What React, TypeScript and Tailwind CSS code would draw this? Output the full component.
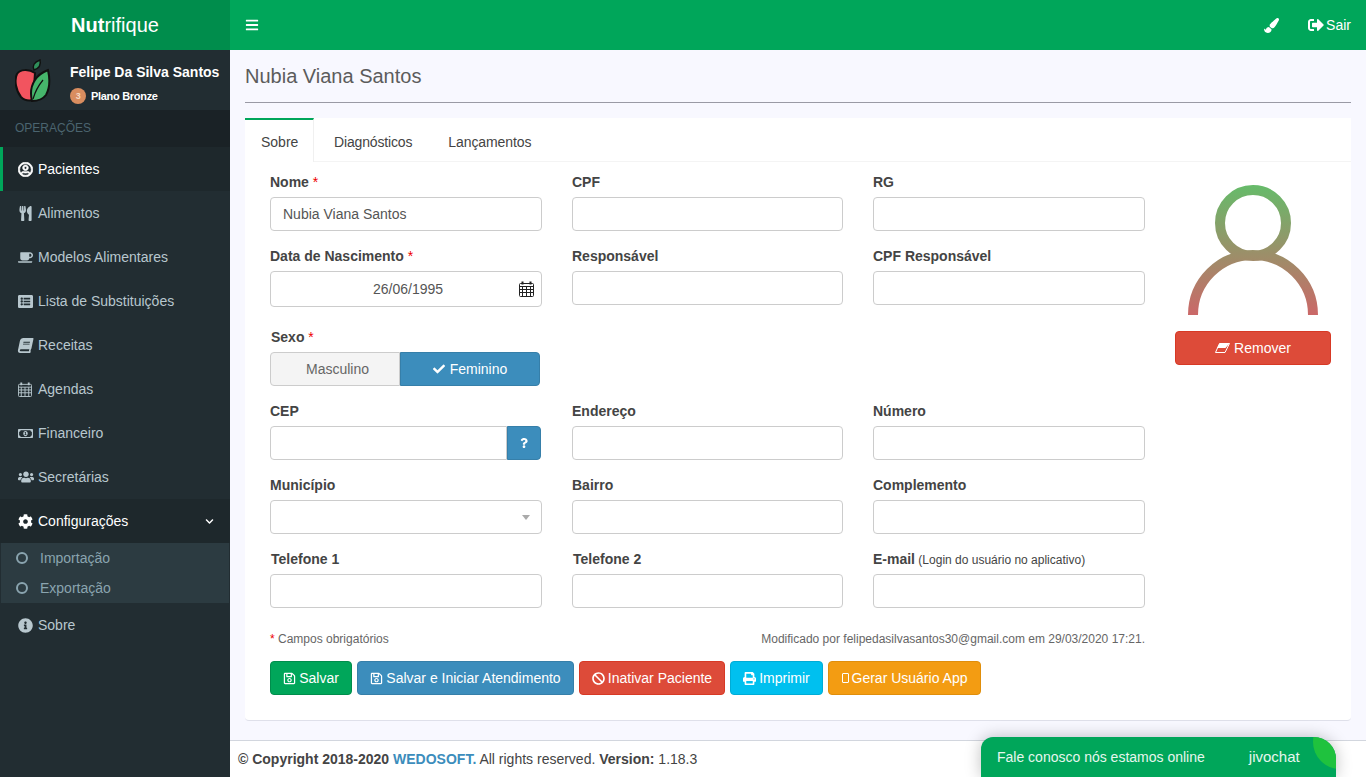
import type { ReactNode } from 'react';
import {
  FaBan,
  FaBars,
  FaBook,
  FaCheck,
  FaChevronDown,
  FaCoffee,
  FaCog,
  FaInfoCircle,
  FaListAlt,
  FaPaintBrush,
  FaPrint,
  FaQuestion,
  FaRegMoneyBillAlt,
  FaRegSave,
  FaRegUserCircle,
  FaSignOutAlt,
  FaUsers,
  FaUtensils,
} from 'react-icons/fa';

function CalendarIcon({ className }: { className?: string }) {
  return (
    <svg viewBox="0 0 15 16" className={className} fill="none" stroke="currentColor" strokeWidth="1">
      <rect x="0.5" y="2.5" width="14" height="13" rx="1" />
      <path d="M0.5 5.5h14M0.5 8.5h14M0.5 11.5h14M3.5 5.5v10M7.5 5.5v10M11.5 5.5v10" />
      <path d="M3.5 0.5v3M11.5 0.5v3" strokeWidth="2" />
    </svg>
  );
}

function EraserIcon() {
  return (
    <svg viewBox="0 0 15 10" className="h-[10px] w-[15px]">
      <path d="M4.5 0.5H14.5L10 9.5H0.5z" fill="none" stroke="#fff" />
      <path d="M4.5 0.5H14.5L10.5 5H2.2z" fill="#fff" />
    </svg>
  );
}

function AppleLogo() {
  return (
    <svg viewBox="0 0 36 44" className="h-[44px] w-[36px] shrink-0">
      <path d="M19 12c-2-4 0-8 6-10 1 4 0 8-6 10z" fill="#2f8f5b" stroke="#111" strokeWidth="1.5" />
      <path d="M20 15C14 11 5 11 2 16-1 22 1 33 6 39c3 3 8 4 12 3z" fill="#f2545f" stroke="#111" strokeWidth="2" />
      <path d="M33 12c2 9 2 18-2 25-3 4-8 6-14 6-2-8-1-15 3-21 3-5 8-8 13-10z" fill="#46b56b" stroke="#111" strokeWidth="2" />
      <path d="M18 41c2-7 5-13 10-19" fill="none" stroke="#111" strokeWidth="1.2" />
    </svg>
  );
}

function AvatarPlaceholder() {
  return (
    <svg viewBox="0 0 130 130" className="h-[130px] w-[130px]" fill="none">
      <defs>
        <linearGradient id="avatarStroke" gradientUnits="userSpaceOnUse" x1="0" y1="0" x2="0" y2="130">
          <stop offset="0" stopColor="#66bb6a" />
          <stop offset="1" stopColor="#cb6868" />
        </linearGradient>
      </defs>
      <circle cx="65" cy="38" r="33" stroke="url(#avatarStroke)" strokeWidth="10" />
      <path d="M5 130A60 60 0 0 1 125 130" stroke="url(#avatarStroke)" strokeWidth="10" />
    </svg>
  );
}

function NavItem({ icon, label, active, open }: { icon: ReactNode; label: string; active?: boolean; open?: boolean }) {
  const tone = active
    ? 'border-l-[3px] border-[#00a65a] bg-[#1e282c] pl-[15px] text-white'
    : open
      ? 'bg-[#1e282c] pl-[18px] text-white'
      : 'pl-[18px] text-[#b8c7ce]';
  return (
    <div className={`flex h-[44px] items-center text-sm ${tone}`}>
      <span className="flex w-[20px] shrink-0 items-center text-[15px]">{icon}</span>
      <span>{label}</span>
      {open && <FaChevronDown className="ml-auto mr-[16px] text-[9px]" />}
    </div>
  );
}

function SubItem({ label }: { label: string }) {
  return (
    <div className="flex h-[30px] items-center pl-[15px] text-sm text-[#8aa4af]">
      <span className="mr-[12px] h-[12px] w-[12px] rounded-full border-2 border-[#8aa4af]" />
      <span>{label}</span>
    </div>
  );
}

function Field({ label, required, note, className, children }: { label: string; required?: boolean; note?: string; className?: string; children?: ReactNode }) {
  return (
    <div className={className}>
      <div className="mb-[5px] h-5 text-sm font-bold leading-5 text-[#444]">
        {label}
        {required && <span className="font-normal text-[#e00]"> *</span>}
        {note && <span className="text-xs font-normal"> {note}</span>}
      </div>
      {children ?? <div className="h-[34px] rounded border border-[#ccc] bg-white" />}
    </div>
  );
}

function ActionButton({ icon, label, color }: { icon: ReactNode; label: string; color: string }) {
  return (
    <button className={`flex h-[34px] items-center justify-center gap-[3px] rounded border text-sm text-white ${color}`}>
      {icon}
      {label}
    </button>
  );
}

export default function App() {
  return (
    <div className="flex h-[777px] w-[1366px] overflow-hidden bg-[#f8f8ff] font-['Liberation_Sans',Arial,sans-serif] text-[#444]">
      <aside className="flex w-[230px] shrink-0 flex-col bg-[#222d32]">
        <div className="flex h-[50px] items-center justify-center bg-[#008d4c] text-[20px] text-white">
          <b>Nut</b>rifique
        </div>
        <div className="flex h-[60px] items-center pl-[15px]">
          <AppleLogo />
          <div className="ml-[19px] self-start pt-[12px]">
            <p className="text-sm font-bold leading-5 text-white">Felipe Da Silva Santos</p>
            <div className="mt-[6px] flex items-center gap-[5px] text-[11px] font-bold tracking-[-0.3px] text-white">
              <span className="flex h-[16px] w-[16px] items-center justify-center rounded-full bg-[#d98d5f] text-[9px] text-[#f6d9c3]">3</span>
              Plano Bronze
            </div>
          </div>
        </div>
        <div className="flex h-[37px] items-center bg-[#1a2226] pb-[2px] pl-[15px] text-xs text-[#4b646f]">OPERAÇÕES</div>
        <NavItem active icon={<FaRegUserCircle stroke="currentColor" strokeWidth={24} />} label="Pacientes" />
        <NavItem icon={<FaUtensils />} label="Alimentos" />
        <NavItem icon={<FaCoffee />} label="Modelos Alimentares" />
        <NavItem icon={<FaListAlt />} label="Lista de Substituições" />
        <NavItem icon={<FaBook className="-skew-x-12" />} label="Receitas" />
        <NavItem icon={<CalendarIcon className="h-[15px] w-[14px]" />} label="Agendas" />
        <NavItem icon={<FaRegMoneyBillAlt />} label="Financeiro" />
        <NavItem icon={<FaUsers className="text-[16px]" />} label="Secretárias" />
        <NavItem open icon={<FaCog />} label="Configurações" />
        <div className="mx-px bg-[#2c3b41]">
          <SubItem label="Importação" />
          <SubItem label="Exportação" />
        </div>
        <NavItem icon={<FaInfoCircle />} label="Sobre" />
      </aside>

      <div className="relative flex min-w-0 flex-1 flex-col">
        <header className="flex h-[50px] shrink-0 items-center bg-[#00a65a] px-[15px] text-sm text-white">
          <FaBars className="text-[14px]" />
          <FaPaintBrush className="ml-auto text-[15px]" />
          <span className="ml-[29px] flex items-center gap-[2px]">
            <FaSignOutAlt className="text-[16px]" />
            Sair
          </span>
        </header>

        <main className="flex-1 px-[15px]">
          <h1 className="flex h-[53px] items-center border-b border-[#9a9aa5] text-[20px] text-[#5c5c5c]">Nubia Viana Santos</h1>
          <section className="mt-[15px] h-[603px] rounded-b border-b border-[#dfe0ea] bg-white">
            <nav className="flex h-[44px] gap-[4px] border-b border-[#f4f4f4] text-sm text-[#444]">
              <div className="-mb-px flex w-[69px] items-center border-r border-t-[2px] border-[#00a65a] border-r-[#f0f0f0] bg-white pl-[16px] pt-[2px]">Sobre</div>
              <div className="flex items-center px-[16px] pt-[4px] tracking-[-0.15px]">Diagnósticos</div>
              <div className="flex items-center px-[16px] pt-[4px] tracking-[-0.1px]">Lançamentos</div>
            </nav>
            <div className="flex pl-[25px] pt-[10px]">
              <div className="w-[875px]">
                <div className="grid grid-cols-[272px_271px_272px] gap-x-[30px] gap-y-[15px]">
                  <Field required label="Nome">
                    <div className="flex h-[34px] items-center rounded border border-[#ccc] bg-white px-[12px] text-sm text-[#555]">Nubia Viana Santos</div>
                  </Field>
                  <Field label="CPF" />
                  <Field label="RG" />
                  <Field required label="Data de Nascimento">
                    <div className="relative flex h-[36px] items-center justify-center rounded border border-[#ccc] bg-white pl-[4px] text-sm text-[#555]">
                      26/06/1995
                      <CalendarIcon className="absolute right-[7px] top-[9px] h-[16px] w-[15px] text-[#222]" />
                    </div>
                  </Field>
                  <Field label="Responsável" />
                  <Field label="CPF Responsável" />
                </div>
                <div className="mt-[20px] w-[270px]">
                  <div className="mb-[5px] h-5 pl-px text-sm font-bold leading-5">
                    Sexo<span className="font-normal text-[#e00]"> *</span>
                  </div>
                  <div className="flex h-[34px] text-sm">
                    <div className="flex w-[130px] items-center justify-center rounded-l border border-[#ccc] bg-[#f4f4f4] pl-[5px] text-[#666]">Masculino</div>
                    <div className="flex flex-1 items-center justify-center gap-[5px] rounded-r border border-[#367fa9] bg-[#3c8dbc] text-white">
                      <FaCheck className="text-[12px]" />
                      Feminino
                    </div>
                  </div>
                </div>
                <div className="mt-[15px] grid grid-cols-[272px_271px_272px] gap-x-[30px] gap-y-[15px]">
                  <Field label="CEP">
                    <div className="mr-px flex h-[34px]">
                      <div className="flex-1 rounded-l border border-[#ccc] bg-white" />
                      <div className="flex w-[34px] items-center justify-center rounded-r border border-[#367fa9] bg-[#3c8dbc] text-white">
                        <FaQuestion className="text-[10px]" />
                      </div>
                    </div>
                  </Field>
                  <Field label="Endereço" />
                  <Field label="Número" />
                  <Field label="Município">
                    <div className="flex h-[34px] items-center justify-end rounded border border-[#ccc] bg-white pr-[11px]">
                      <span className="h-0 w-0 border-x-[4px] border-t-[5px] border-x-transparent border-t-[#aaa]" />
                    </div>
                  </Field>
                  <Field label="Bairro" />
                  <Field label="Complemento" />
                  <Field label="Telefone 1" className="[&>div:first-child]:pl-px" />
                  <Field label="Telefone 2" className="[&>div:first-child]:pl-px" />
                  <Field label="E-mail" note="(Login do usuário no aplicativo)" />
                </div>
                <div className="mt-[23px] flex h-[16px] items-center justify-between text-xs text-[#666]">
                  <span>
                    <span className="text-[#e00]">*</span> Campos obrigatórios
                  </span>
                  <span>Modificado por felipedasilvasantos30@gmail.com em 29/03/2020 17:21.</span>
                </div>
              </div>
              <div className="ml-[30px] flex w-[156px] flex-col items-center pt-[13px]">
                <AvatarPlaceholder />
                <button className="mt-[16px] flex h-[34px] w-full items-center justify-center gap-[4px] rounded border border-[#d73925] bg-[#dd4b39] text-sm text-white">
                  <EraserIcon />
                  Remover
                </button>
              </div>
            </div>
            <div className="ml-[25px] mt-[14px] flex gap-[5px]">
              <ActionButton color="w-[82px] border-[#008d4c] bg-[#00a65a]" icon={<FaRegSave className="text-[13px]" />} label="Salvar" />
              <ActionButton color="w-[217px] border-[#367fa9] bg-[#3c8dbc]" icon={<FaRegSave className="text-[13px]" />} label="Salvar e Iniciar Atendimento" />
              <ActionButton color="w-[146px] border-[#d73925] bg-[#dd4b39]" icon={<FaBan className="text-[13px]" />} label="Inativar Paciente" />
              <ActionButton color="w-[93px] border-[#00acd6] bg-[#00c0ef]" icon={<FaPrint className="text-[13px]" />} label="Imprimir" />
              <ActionButton color="w-[153px] border-[#e08e0b] bg-[#f39c12]" icon={<span className="block h-[10px] w-[7px] rounded-[1px] border border-white" />} label="Gerar Usuário App" />
            </div>
          </section>
        </main>

        <footer className="flex h-[37px] shrink-0 items-center border-t border-[#d2d6de] bg-white pl-[8px] text-sm text-[#444]">
          <span>
            <b>© Copyright 2018-2020 </b>
            <b className="text-[#3c8dbc]">WEDOSOFT.</b> All rights reserved. <b>Version:</b> 1.18.3
          </span>
        </footer>

        <div className="absolute bottom-0 left-[751px] flex h-[40px] w-[355px] items-center overflow-hidden rounded-tl-[12px] rounded-tr-[22px] bg-[#00a65a] pl-[16px] text-sm text-[#e6f6ee] shadow-[0_0_16px_rgba(0,0,0,0.25)]">
          Fale conosco nós estamos online
          <span className="ml-[44px] text-[15px]">jivochat</span>
          <span className="absolute -right-[31px] -top-[22px] h-[54px] w-[54px] rounded-full bg-[#1fc23e]" />
        </div>
      </div>
    </div>
  );
}
